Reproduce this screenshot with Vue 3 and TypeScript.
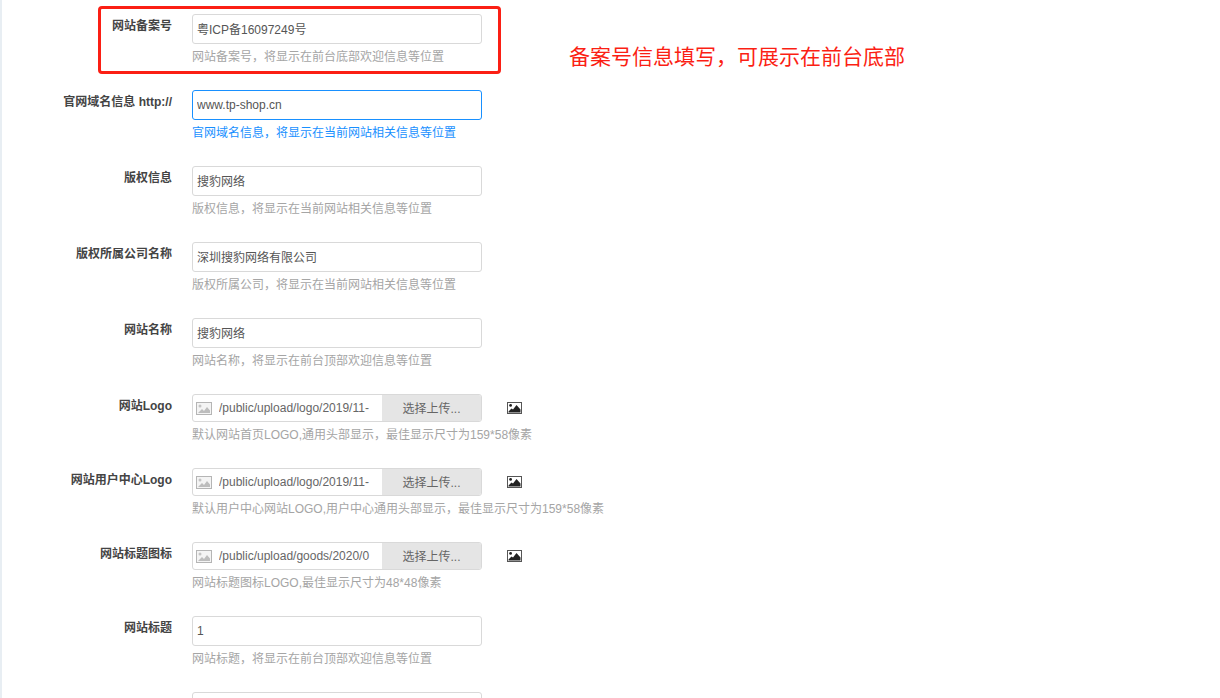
<script setup lang="ts">
interface Row {
  label: string;
  hint: string;
  value: string;
  upload?: boolean;
  focused?: boolean;
}

const c = '\uFF0C';
const note = `备案号信息填写${c}可展示在前台底部`;

const rows: Row[] = [
  { label: '网站备案号', value: '粤ICP备16097249号', hint: `网站备案号${c}将显示在前台底部欢迎信息等位置` },
  { label: '官网域名信息 http://', value: 'www.tp-shop.cn', hint: `官网域名信息${c}将显示在当前网站相关信息等位置`, focused: true },
  { label: '版权信息', value: '搜豹网络', hint: `版权信息${c}将显示在当前网站相关信息等位置` },
  { label: '版权所属公司名称', value: '深圳搜豹网络有限公司', hint: `版权所属公司${c}将显示在当前网站相关信息等位置` },
  { label: '网站名称', value: '搜豹网络', hint: `网站名称${c}将显示在前台顶部欢迎信息等位置` },
  { label: '网站Logo', value: '/public/upload/logo/2019/11-', hint: `默认网站首页LOGO,通用头部显示${c}最佳显示尺寸为159*58像素`, upload: true },
  { label: '网站用户中心Logo', value: '/public/upload/logo/2019/11-', hint: `默认用户中心网站LOGO,用户中心通用头部显示${c}最佳显示尺寸为159*58像素`, upload: true },
  { label: '网站标题图标', value: '/public/upload/goods/2020/0', hint: '网站标题图标LOGO,最佳显示尺寸为48*48像素', upload: true },
  { label: '网站标题', value: '1', hint: `网站标题${c}将显示在前台顶部欢迎信息等位置` },
  { label: '', value: '', hint: '' },
];
</script>

<template>
  <div class="page">
    <div class="form">
      <div v-for="(row, i) in rows" :key="i" class="row" :class="{ focused: row.focused }">
        <div class="label">{{ row.label }}</div>
        <div class="field">
          <div v-if="row.upload" class="upload-line">
            <div class="upload">
              <svg class="file-icon" width="16" height="13" viewBox="0 0 16 13">
                <rect x="0.5" y="0.5" width="15" height="12" fill="#f4f4f4" stroke="#b5b5b5" />
                <circle cx="4" cy="4" r="1.5" fill="#c4c4c4" />
                <path d="M2 11 L6 7 L8 9 L11 5 L14 8.5 V11 Z" fill="#bdbdbd" />
              </svg>
              <span class="path">{{ row.value }}</span>
              <span class="pick">选择上传...</span>
            </div>
            <svg class="pic" width="15" height="12" viewBox="0 0 15 12">
              <rect x="0.5" y="0.5" width="14" height="11" fill="#fff" stroke="#555" />
              <circle cx="3.6" cy="3.4" r="1.4" fill="#222" />
              <path d="M1.5 10.5 V9.5 L4.5 6.5 L6 7.5 L9.5 3 L13.5 7.5 V10.5 Z" fill="#222" />
            </svg>
          </div>
          <input v-else class="text" type="text" :value="row.value" readonly />
          <div class="hint">{{ row.hint }}</div>
        </div>
      </div>
    </div>
    <div class="callout"></div>
    <div class="note">{{ note }}</div>
  </div>
</template>

<style>
html,
body {
  margin: 0;
  background: #fff;
  overflow: hidden;
}
</style>

<style scoped>
.page {
  position: relative;
  height: 698px;
  overflow: hidden;
  box-sizing: border-box;
  border-left: 2px solid #e8eef3;
  background: #fff;
  font-family: "Liberation Sans", "Noto Sans CJK SC", sans-serif;
  font-size: 12px;
  color: #333;
}
.form {
  display: flex;
  flex-direction: column;
  padding-top: 14px;
}
.row {
  display: flex;
  gap: 20px;
  padding-bottom: 24px;
}
.label {
  width: 170px;
  flex: none;
  box-sizing: border-box;
  padding-top: 3px;
  line-height: 18px;
  text-align: right;
  font-weight: 700;
  color: #444;
}
.field {
  width: 290px;
}
.text {
  display: block;
  width: 290px;
  height: 30px;
  box-sizing: border-box;
  padding: 0 4px 1px;
  border: 1px solid #d9d9d9;
  border-radius: 3px;
  outline: none;
  background: #fff;
  font: inherit;
  color: #555;
}
.focused .text {
  border-color: #1890ff;
}
.hint {
  margin-top: 4px;
  height: 18px;
  line-height: 18px;
  color: #a5a5a5;
  white-space: nowrap;
}
.focused .hint {
  color: #1890ff;
}
.upload-line {
  position: relative;
  display: flex;
  align-items: center;
  gap: 25px;
  width: 340px;
}
.upload {
  display: flex;
  align-items: center;
  flex: none;
  width: 290px;
  height: 28px;
  box-sizing: border-box;
  border: 1px solid #d9d9d9;
  border-radius: 3px;
  overflow: hidden;
}
.file-icon {
  flex: none;
  margin-left: 3px;
}
.path {
  flex: 1;
  margin-left: 7px;
  color: #666;
  white-space: nowrap;
  overflow: hidden;
}
.pick {
  flex: none;
  width: 99px;
  height: 100%;
  line-height: 28px;
  text-align: center;
  background: #e5e5e5;
  color: #666;
}
.pic {
  flex: none;
}
.callout {
  position: absolute;
  left: 96px;
  top: 6px;
  width: 403px;
  height: 68px;
  box-sizing: border-box;
  border: 3px solid #fb1f14;
  border-radius: 4px;
}
.note {
  position: absolute;
  left: 567px;
  top: 42px;
  font-size: 21px;
  line-height: 30px;
  color: #fb1f14;
  white-space: nowrap;
}
</style>
